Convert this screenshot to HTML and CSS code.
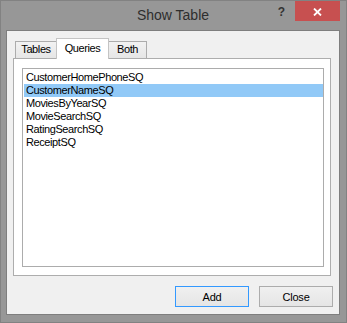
FILE: index.html
```html
<!DOCTYPE html>
<html>
<head>
  <title>Show Table</title>
  <link rel="stylesheet" href="styles.css">
</head>
<body>
  <div class="window">
    <div class="titlebar">
      <span></span>
      <div class="title">Show Table</div>
      <div class="controls">
        <span class="help">?</span>
        <div class="close-box">
          <svg width="9" height="8" viewBox="0 0 9 8">
            <path d="M1 0.5 L8 7.5 M8 0.5 L1 7.5" stroke="#fff" stroke-width="1.8" fill="none"/>
          </svg>
        </div>
      </div>
    </div>

    <div class="client">
      <div class="tabs">
        <div class="tab">Tables</div>
        <div class="tab selected">Queries</div>
        <div class="tab">Both</div>
      </div>

      <div class="panel">
        <ul class="list">
          <li>CustomerHomePhoneSQ</li>
          <li class="active">CustomerNameSQ</li>
          <li>MoviesByYearSQ</li>
          <li>MovieSearchSQ</li>
          <li>RatingSearchSQ</li>
          <li>ReceiptSQ</li>
        </ul>
      </div>

      <div class="buttons">
        <button class="btn default">Add</button>
        <button class="btn">Close</button>
      </div>
    </div>
  </div>
</body>
</html>
```

FILE: styles.css
```css
html, body {
  margin: 0;
  padding: 0;
  background: #fff;
  font-family: "Liberation Sans", Arial, sans-serif;
}

.window {
  box-sizing: border-box;
  width: 347px;
  height: 323px;
  background: #979797;
  border: 1px solid #828282;
  padding: 0 6px 7px 5px;
  display: flex;
  flex-direction: column;
}

.titlebar {
  height: 29px;
  display: grid;
  grid-template-columns: 1fr auto 1fr;
  margin: 0 -6px 0 -5px;
  padding: 0 6px 0 5px;
}

.title {
  font-size: 14px;
  line-height: 29px;
  color: #2e2e2e;
}

.controls {
  display: flex;
  justify-content: flex-end;
  align-items: flex-start;
}

.help {
  font-size: 12px;
  font-weight: bold;
  color: #333;
  line-height: 12px;
  margin: 5px 10px 0 0;
}

.close-box {
  width: 45px;
  height: 20px;
  background: #c75050;
  display: flex;
  align-items: center;
  justify-content: center;
}

.close-box svg {
  display: block;
  margin-top: 1px;
}

.client {
  flex: 1;
  background: #f0f0f0;
  border: 1px solid #7e7e7e;
  display: flex;
  flex-direction: column;
  font-size: 11px;
  letter-spacing: -0.4px;
  color: #000;
}

.tabs {
  display: flex;
  align-items: flex-end;
  height: 20px;
  margin: 7px 0 0 8px;
}

.tab {
  box-sizing: border-box;
  height: 17px;
  width: 42px;
  border: 1px solid #acacac;
  border-bottom: none;
  background: linear-gradient(#f2f2f2, #e6e6e6);
  text-align: center;
  line-height: 15px;
}

.tab + .tab {
  margin-left: -1px;
}

.tab.selected {
  position: relative;
  z-index: 1;
  width: 53px;
  height: 21px;
  margin-bottom: -1px;
  background: #fff;
  border-color: #c4c4c4;
  padding-top: 2px;
}

.tab:last-child {
  width: 39px;
}

.panel {
  height: 218px;
  box-sizing: border-box;
  margin: 0 8px 0 6px;
  background: #fff;
  border: 1px solid #adadad;
  padding: 9px 6px 8px 8px;
}

.list {
  box-sizing: border-box;
  height: 199px;
  margin: 0;
  padding: 2px 0 0 1px;
  list-style: none;
  border: 1px solid #acacac;
  background: #fff;
}

.list li {
  height: 13px;
  line-height: 13px;
  padding-left: 2px;
  white-space: nowrap;
}

.list li.active {
  background: #91c9f7;
}

.buttons {
  display: flex;
  justify-content: flex-end;
  gap: 10px;
  margin-top: 10px;
  padding-right: 6px;
}

.btn {
  box-sizing: border-box;
  width: 74px;
  height: 21px;
  border: 1px solid #acacac;
  background: linear-gradient(#f0f0f0, #e5e5e5);
  font-family: "Liberation Sans", Arial, sans-serif;
  font-size: 11px;
  letter-spacing: -0.2px;
  color: #000;
  padding: 0;
}

.btn.default {
  border-color: #3399ff;
}
```
